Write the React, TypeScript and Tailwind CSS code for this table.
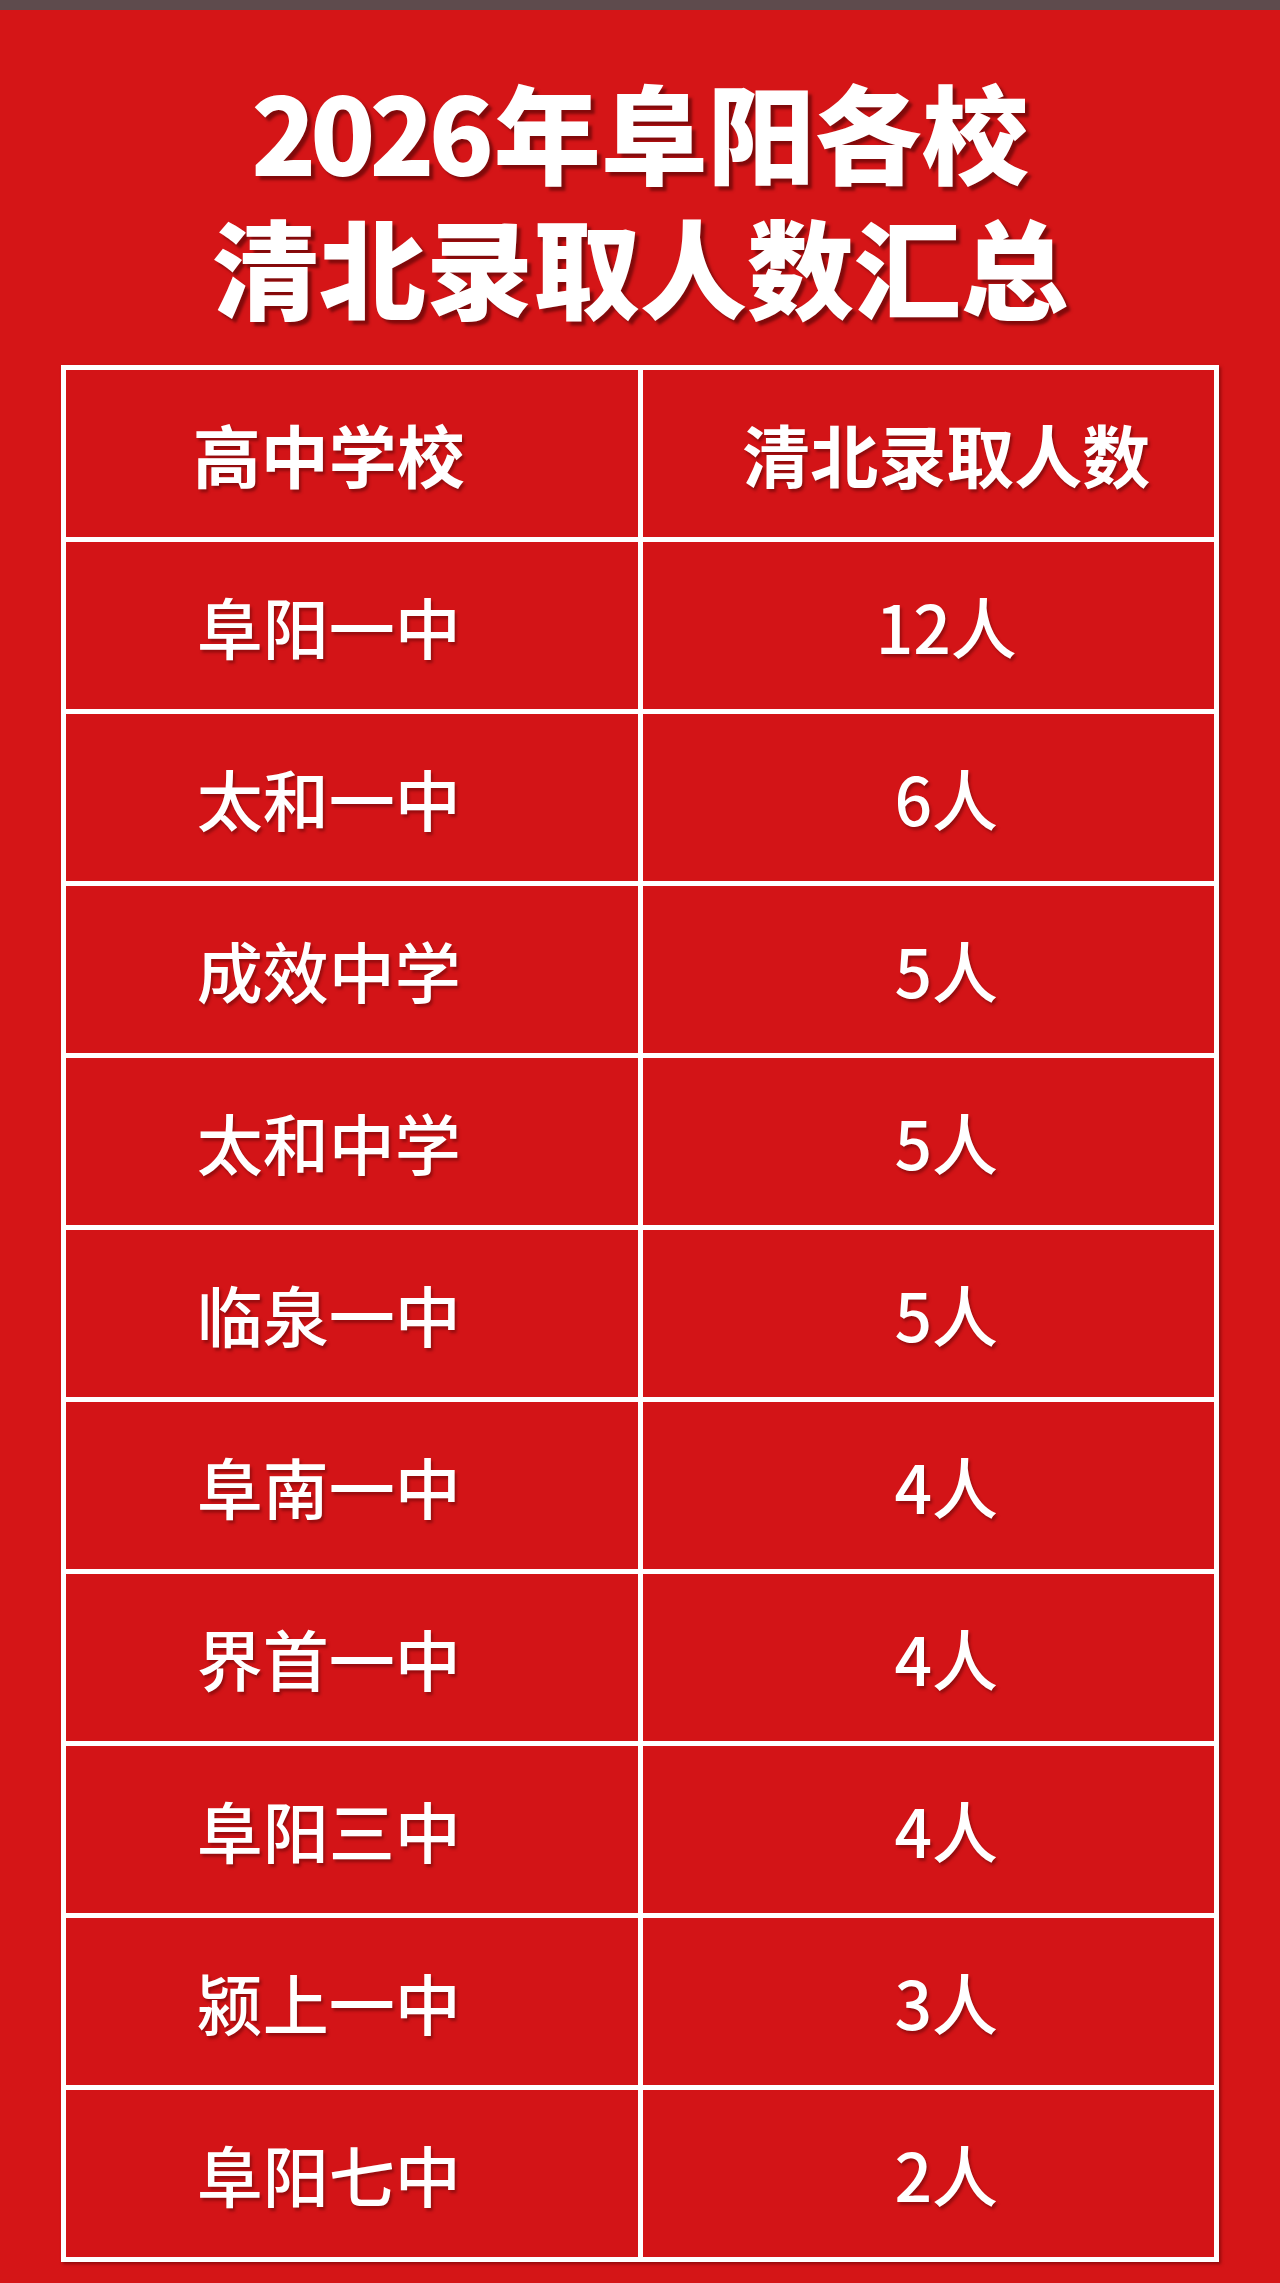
import * as React from "react"

const rows = [
  { school: "阜阳一中", count: "12人" },
  { school: "太和一中", count: "6人" },
  { school: "成效中学", count: "5人" },
  { school: "太和中学", count: "5人" },
  { school: "临泉一中", count: "5人" },
  { school: "阜南一中", count: "4人" },
  { school: "界首一中", count: "4人" },
  { school: "阜阳三中", count: "4人" },
  { school: "颍上一中", count: "3人" },
  { school: "阜阳七中", count: "2人" },
]

const font = "font-['Noto_Sans_CJK_SC','Noto_Sans',sans-serif]"

export default function App() {
  return (
    <div className={`w-[1280px] h-[2283px] bg-[#d51517] ${font} text-white overflow-hidden`}>
      <div className="h-[10px] bg-[#5e4b4d]" />

      <div className="mt-[52px] flex flex-col items-center text-[107px] leading-[135px] font-black [text-shadow:4px_4px_3px_rgba(60,0,0,0.55)]">
        <div className="h-[135px]">
          <span className="tracking-[-6px] mr-[6px]">2026</span>年阜阳各校
        </div>
        <div className="h-[135px]">清北录取人数汇总</div>
      </div>

      <div className="mt-[33px] mx-[61px] bg-white p-[5px] grid grid-cols-2 gap-[5px] shadow-[2px_2px_3px_rgba(80,0,0,0.5)]">
        <div className="h-[167px] bg-[#d31417] flex items-center justify-center pr-[46px] text-[68px] font-bold [text-shadow:2px_3px_3px_rgba(60,0,0,0.45)]">
          高中学校
        </div>
        <div className="h-[167px] bg-[#d31417] flex items-center justify-center pl-[36px] text-[68px] font-bold [text-shadow:2px_3px_3px_rgba(60,0,0,0.45)]">
          清北录取人数
        </div>
        {rows.map((r) => (
          <React.Fragment key={r.school}>
            <div className="h-[167px] bg-[#d31417] flex items-center justify-center pr-[46px] text-[66px] font-medium [text-shadow:2px_3px_3px_rgba(60,0,0,0.4)]">
              {r.school}
            </div>
            <div className="h-[167px] bg-[#d31417] flex items-center justify-center pl-[36px] text-[66px] font-medium [text-shadow:2px_3px_3px_rgba(60,0,0,0.4)]">
              {r.count}
            </div>
          </React.Fragment>
        ))}
      </div>
    </div>
  )
}
